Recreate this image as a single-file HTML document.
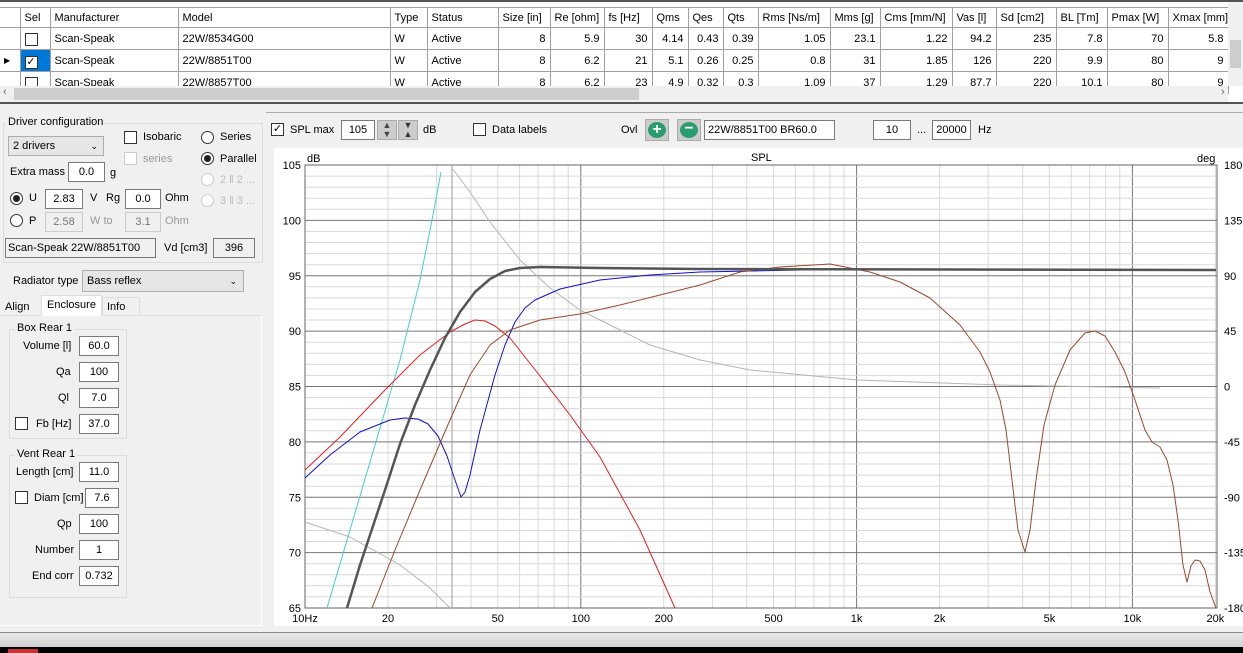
<!DOCTYPE html>
<html><head><meta charset="utf-8"><style>
*{box-sizing:border-box}
body{margin:0;width:1243px;height:653px;overflow:hidden;background:#f0f0f0;font-family:"Liberation Sans",sans-serif;font-size:11px;color:#000;position:relative}
.a{position:absolute;white-space:nowrap}
.tb{position:absolute;background:#fff;border:1px solid #7a7a7a;height:20px;text-align:center;line-height:18px}
.tb.d{background:#f0f0f0;border-color:#ccc;color:#777}
.cb{position:absolute;width:13px;height:13px;border:1px solid #333;background:#fff}
.rb{position:absolute;width:13px;height:13px;border:1px solid #333;border-radius:50%;background:#fff}
.rb.on::after{content:"";position:absolute;left:2px;top:2px;width:7px;height:7px;border-radius:50%;background:#222}
.grp{position:absolute;border:1px solid #dcdcdc}
table{border-collapse:collapse;position:absolute;left:0;top:8px;background:#fff}
td{border:1px solid #a0a0a0;height:22px;padding:0 4px;white-space:nowrap;overflow:hidden}
tr.h td{background:#fff;height:20px}
.r{text-align:right}
</style></head><body>
<div class="a" style="left:0;top:0;width:1243px;height:104px;background:#fff;border-top:2px solid #555;border-bottom:2px solid #555"></div>
<table style="width:1228px;table-layout:fixed;top:7px">
<colgroup><col style="width:20px"><col style="width:30px"><col style="width:128px"><col style="width:212px"><col style="width:37px"><col style="width:71px"><col style="width:52px"><col style="width:54px"><col style="width:48px"><col style="width:36px"><col style="width:35px"><col style="width:35px"><col style="width:72px"><col style="width:50px"><col style="width:72px"><col style="width:44px"><col style="width:60px"><col style="width:51px"><col style="width:61px"><col style="width:60px"></colgroup>
<tr class="h"><td style="border-left:none"></td><td>Sel</td><td>Manufacturer</td><td>Model</td><td>Type</td><td>Status</td><td>Size [in]</td><td>Re [ohm]</td><td>fs [Hz]</td><td>Qms</td><td>Qes</td><td>Qts</td><td>Rms [Ns/m]</td><td>Mms [g]</td><td>Cms [mm/N]</td><td>Vas [l]</td><td>Sd [cm2]</td><td>BL [Tm]</td><td>Pmax [W]</td><td>Xmax [mm]</td></tr>
<tr><td style="border-left:none"></td><td><span class="cb" style="position:relative;display:inline-block;top:2px"></span></td><td>Scan-Speak</td><td>22W/8534G00</td><td>W</td><td>Active</td><td class="r">8</td><td class="r">5.9</td><td class="r">30</td><td class="r">4.14</td><td class="r">0.43</td><td class="r">0.39</td><td class="r">1.05</td><td class="r">23.1</td><td class="r">1.22</td><td class="r">94.2</td><td class="r">235</td><td class="r">7.8</td><td class="r">70</td><td class="r">5.8</td></tr>
<tr><td style="border-left:none;font-size:8px">&#9654;</td><td style="background:#0078d7"><span class="cb" style="position:relative;display:inline-block;top:2px;font-size:11px;line-height:11px;text-align:center">&#10003;</span></td><td>Scan-Speak</td><td>22W/8851T00</td><td>W</td><td>Active</td><td class="r">8</td><td class="r">6.2</td><td class="r">21</td><td class="r">5.1</td><td class="r">0.26</td><td class="r">0.25</td><td class="r">0.8</td><td class="r">31</td><td class="r">1.85</td><td class="r">126</td><td class="r">220</td><td class="r">9.9</td><td class="r">80</td><td class="r">9</td></tr>
<tr><td style="border-left:none"></td><td><span class="cb" style="position:relative;display:inline-block;top:2px"></span></td><td>Scan-Speak</td><td>22W/8857T00</td><td>W</td><td>Active</td><td class="r">8</td><td class="r">6.2</td><td class="r">23</td><td class="r">4.9</td><td class="r">0.32</td><td class="r">0.3</td><td class="r">1.09</td><td class="r">37</td><td class="r">1.29</td><td class="r">87.7</td><td class="r">220</td><td class="r">10.1</td><td class="r">80</td><td class="r">9</td></tr>
</table>
<div class="a" style="left:0;top:86px;width:1228px;height:16px;background:#f0f0f0"></div>
<div class="a" style="left:14px;top:88px;width:625px;height:12px;background:#cdcdcd"></div>
<div class="a" style="left:3px;top:86px;color:#666">&lsaquo;</div>
<div class="a" style="left:1221px;top:86px;color:#666">&rsaquo;</div>
<div class="a" style="left:1228px;top:2px;width:15px;height:84px;background:#f0f0f0"></div>
<div class="a" style="left:1230px;top:40px;width:11px;height:28px;background:#cdcdcd"></div>

<div class="grp" style="left:3px;top:123px;width:260px;height:140px"></div>
<div class="a" style="left:6px;top:116px;background:#f0f0f0;padding:0 2px">Driver configuration</div>
<div class="tb" style="left:8px;top:136px;width:96px;height:20px;text-align:left;padding-left:4px;background:#e6e6e6;border-color:#adadad">2 drivers<span style="position:absolute;right:5px;font-size:9px">&#8964;</span></div>
<div class="cb" style="left:124px;top:131px"></div><div class="a" style="left:143px;top:131px">Isobaric</div>
<div class="cb" style="left:124px;top:152px;border-color:#ccc"></div><div class="a" style="left:143px;top:153px;color:#999">series</div>
<div class="rb" style="left:201px;top:131px"></div><div class="a" style="left:220px;top:131px">Series</div>
<div class="rb on" style="left:201px;top:152px"></div><div class="a" style="left:220px;top:153px">Parallel</div>
<div class="rb" style="left:201px;top:173px;border-color:#ccc"></div><div class="a" style="left:220px;top:174px;color:#bbb">2 ‖ 2 ...</div>
<div class="rb" style="left:201px;top:194px;border-color:#ccc"></div><div class="a" style="left:220px;top:195px;color:#bbb">3 ‖ 3 ...</div>
<div class="a" style="left:10px;top:166px">Extra mass</div><div class="tb" style="left:68px;top:162px;width:37px">0.0</div><div class="a" style="left:110px;top:167px">g</div>
<div class="rb on" style="left:10px;top:192px"></div><div class="a" style="left:29px;top:192px">U</div><div class="tb" style="left:45px;top:189px;width:38px">2.83</div><div class="a" style="left:90px;top:192px">V</div><div class="a" style="left:106px;top:192px">Rg</div><div class="tb" style="left:125px;top:189px;width:36px">0.0</div><div class="a" style="left:165px;top:192px">Ohm</div>
<div class="rb" style="left:10px;top:214px"></div><div class="a" style="left:29px;top:215px">P</div><div class="tb d" style="left:45px;top:212px;width:38px">2.58</div><div class="a" style="left:90px;top:215px;color:#999">W to</div><div class="tb d" style="left:125px;top:212px;width:36px">3.1</div><div class="a" style="left:165px;top:215px;color:#999">Ohm</div>
<div class="tb" style="left:5px;top:238px;width:151px;background:#f0f0f0;text-align:left;padding-left:2px">Scan-Speak 22W/8851T00</div><div class="a" style="left:164px;top:242px">Vd [cm3]</div><div class="tb" style="left:213px;top:238px;width:42px;background:#f0f0f0">396</div>
<div class="a" style="left:13px;top:275px">Radiator type</div>
<div class="tb" style="left:82px;top:270px;width:162px;height:22px;text-align:left;padding-left:4px;background:#e6e6e6;border-color:#adadad;line-height:20px">Bass reflex<span style="position:absolute;right:6px;font-size:9px">&#8964;</span></div>
<div class="a" style="left:0;top:315px;width:262px;height:1px;background:#ddd"></div>
<div class="a" style="left:5px;top:301px">Align</div>
<div class="a" style="left:41px;top:295px;width:61px;height:21px;background:#fff;border:1px solid #ddd;border-bottom:none;text-align:center;line-height:19px">Enclosure</div>
<div class="a" style="left:102px;top:297px;width:38px;height:19px;border:1px solid #ddd;border-bottom:none;padding-left:4px;line-height:18px">Info</div>
<div class="a" style="left:2px;top:316px;width:260px;height:310px;background:#f0f0f0;border-right:1px solid #fff;border-bottom:1px solid #fff"></div>
<div class="grp" style="left:9px;top:329px;width:118px;height:110px"></div>
<div class="a" style="left:15px;top:322px;background:#f0f0f0;padding:0 2px">Box Rear 1</div>
<div class="a" style="left:23px;top:340px">Volume [l]</div><div class="tb" style="left:79px;top:336px;width:40px">60.0</div>
<div class="a" style="left:56px;top:366px">Qa</div><div class="tb" style="left:79px;top:362px;width:40px">100</div>
<div class="a" style="left:58px;top:392px">Ql</div><div class="tb" style="left:79px;top:388px;width:40px">7.0</div>
<div class="cb" style="left:15px;top:417px"></div><div class="a" style="left:36px;top:418px">Fb [Hz]</div><div class="tb" style="left:79px;top:414px;width:40px">37.0</div>
<div class="grp" style="left:9px;top:455px;width:118px;height:143px"></div>
<div class="a" style="left:15px;top:448px;background:#f0f0f0;padding:0 2px">Vent Rear 1</div>
<div class="a" style="left:16px;top:466px">Length [cm]</div><div class="tb" style="left:79px;top:462px;width:40px">11.0</div>
<div class="cb" style="left:15px;top:491px"></div><div class="a" style="left:34px;top:492px">Diam [cm]</div><div class="tb" style="left:85px;top:488px;width:34px">7.6</div>
<div class="a" style="left:57px;top:518px">Qp</div><div class="tb" style="left:79px;top:514px;width:40px">100</div>
<div class="a" style="left:35px;top:544px">Number</div><div class="tb" style="left:79px;top:540px;width:40px">1</div>
<div class="a" style="left:32px;top:570px">End corr</div><div class="tb" style="left:79px;top:566px;width:40px">0.732</div>

<div class="a" style="left:0;top:632px;width:1243px;height:15px;background:linear-gradient(#e8e8e8,#d0d0d0);border-top:1px solid #888"></div>
<div class="a" style="left:0;top:647px;width:1243px;height:6px;background:#000"></div>
<div class="a" style="left:8px;top:649px;width:30px;height:4px;background:#c33"></div>

<div class="a" style="left:266px;top:112px;width:977px;height:1px;background:#aaa"></div>
<div class="cb" style="left:271px;top:123px;font-size:11px;line-height:11px;text-align:center">&#10003;</div><div class="a" style="left:290px;top:124px">SPL max</div>
<div class="tb" style="left:341px;top:120px;width:34px">105</div>
<div class="a" style="left:377px;top:120px;width:20px;height:20px;background:#ccc;border:1px solid #aaa;text-align:center;font-size:9px;line-height:9px;color:#444">▲<br>▼</div>
<div class="a" style="left:398px;top:120px;width:20px;height:20px;background:#ccc;border:1px solid #aaa;text-align:center;font-size:9px;line-height:9px;color:#333">▼<br>▲</div>
<div class="a" style="left:423px;top:124px">dB</div>
<div class="cb" style="left:473px;top:123px"></div><div class="a" style="left:492px;top:124px">Data labels</div>
<div class="a" style="left:621px;top:124px">Ovl</div>
<div class="a" style="left:645px;top:119px;width:24px;height:22px;background:#ccc;border:1px solid #aaa"><div style="margin:2px;width:18px;height:16px;border-radius:50%;background:#2a9d6f;color:#fff;text-align:center;font-weight:bold;font-size:16px;line-height:16px">+</div></div>
<div class="a" style="left:677px;top:119px;width:24px;height:22px;background:#ccc;border:1px solid #aaa"><div style="margin:2px;width:18px;height:16px;border-radius:50%;background:#2a9d6f;color:#fff;text-align:center;font-weight:bold;font-size:16px;line-height:14px">&#8722;</div></div>
<div class="tb" style="left:704px;top:120px;width:131px;text-align:left;padding-left:3px">22W/8851T00 BR60.0</div>
<div class="tb" style="left:873px;top:120px;width:38px">10</div><div class="a" style="left:917px;top:124px">...</div>
<div class="tb" style="left:932px;top:120px;width:39px">20000</div><div class="a" style="left:978px;top:124px">Hz</div>

<div class="a" style="left:274px;top:148px;width:969px;height:478px;background:#fff"></div>
<svg class="a" style="left:0;top:0" width="1243" height="653" id="ch" font-family="Liberation Sans, sans-serif" font-size="11"></svg>
<script>
var s='',X0=305,DW=275.8,Y0=165,DY=11.075;
function fx(f){return X0+Math.log10(f/10)*DW}
for(var d=10;d<=10000;d*=10)for(var k=1;k<10;k++){var f=d*k;if(f>20000)break;var x=fx(f).toFixed(1);var maj=(k==1);s+='<line x1="'+x+'" y1="165" x2="'+x+'" y2="608" stroke="'+(maj?'#777':'#d8d8d8')+'" stroke-width="1"/>';}
for(var db=65;db<=105;db++){var y=(Y0+(105-db)*DY).toFixed(1);var maj=db%5==0;s+='<line x1="305" y1="'+y+'" x2="1217" y2="'+y+'" stroke="'+(maj?'#777':'#d8d8d8')+'"/>';if(maj)s+='<text x="301" y="'+(+y+4)+'" text-anchor="end">'+db+'</text>';}
s+='<rect x="305" y="165" width="912" height="443" fill="none" stroke="#666"/>';
var deg=[180,135,90,45,0,-45,-90,-135,-180];
deg.forEach(function(v,i){var y=165+i*55.375;s+='<text x="1224" y="'+(y+4)+'">'+v+'</text>'});
s+='<text x="307" y="162">dB</text><text x="751" y="161">SPL</text><text x="1197" y="162">deg</text>';
[[10,'10Hz'],[20,'20'],[50,'50'],[100,'100'],[200,'200'],[500,'500'],[1000,'1k'],[2000,'2k'],[5000,'5k'],[10000,'10k'],[20000,'20k']].forEach(function(a){s+='<text x="'+fx(a[0]).toFixed(1)+'" y="622" text-anchor="middle">'+a[1]+'</text>'});
s+='<line x1="452" y1="165" x2="452" y2="608" stroke="#999"/>';
function P(pts,c,w){s+='<polyline fill="none" stroke="'+c+'" stroke-width="'+w+'" stroke-linejoin="round" points="'+pts+'"/>'}
P('305,522 350,537 400,565 430,588 450,608','#b5b5b5',1);
P('452,168 470,192 490,222 520,260 550,288 580,310 620,330 650,345 700,360 750,370 857,380 1000,385 1160,388','#b5b5b5',1);
P('327,608 350,530 375,445 400,360 420,280 433,215 441,172','#40d0c8',1);
P('305,470 340,437 385,390 420,355 450,332 465,324 475,320 485,321 495,326 510,338 540,376 570,415 600,457 640,530 675,608','#e02020',1);
P('305,478 330,455 360,432 390,420 405,418 418,419 428,424 438,436 447,456 455,480 461,497 465,492 470,475 480,430 495,375 505,345 515,322 525,308 535,300 560,289 600,280 650,275 700,272 800,270 1216,270','#1010d0',1);
P('372,608 395,550 420,490 450,420 470,375 490,345 510,330 540,320 580,314 620,305 660,295 700,285 740,272 780,267 830,264 870,272 900,282 930,298 960,325 980,352 990,372 1000,400 1006,430 1012,480 1018,530 1025,552 1030,530 1036,480 1044,425 1055,385 1070,350 1085,333 1095,331 1105,336 1115,352 1125,372 1135,400 1145,430 1152,442 1160,447 1167,460 1173,485 1178,520 1183,565 1187,582 1191,566 1195,560 1200,561 1205,570 1210,592 1216,608','#9a4a2a',1);
P('347,608 360,565 370,535 385,490 400,444 415,405 430,370 445,338 460,312 475,292 490,279 505,271 520,268 540,267 600,268 700,269 1216,270','#555',2.5);
document.getElementById('ch').innerHTML=s;
</script>
</body></html>
